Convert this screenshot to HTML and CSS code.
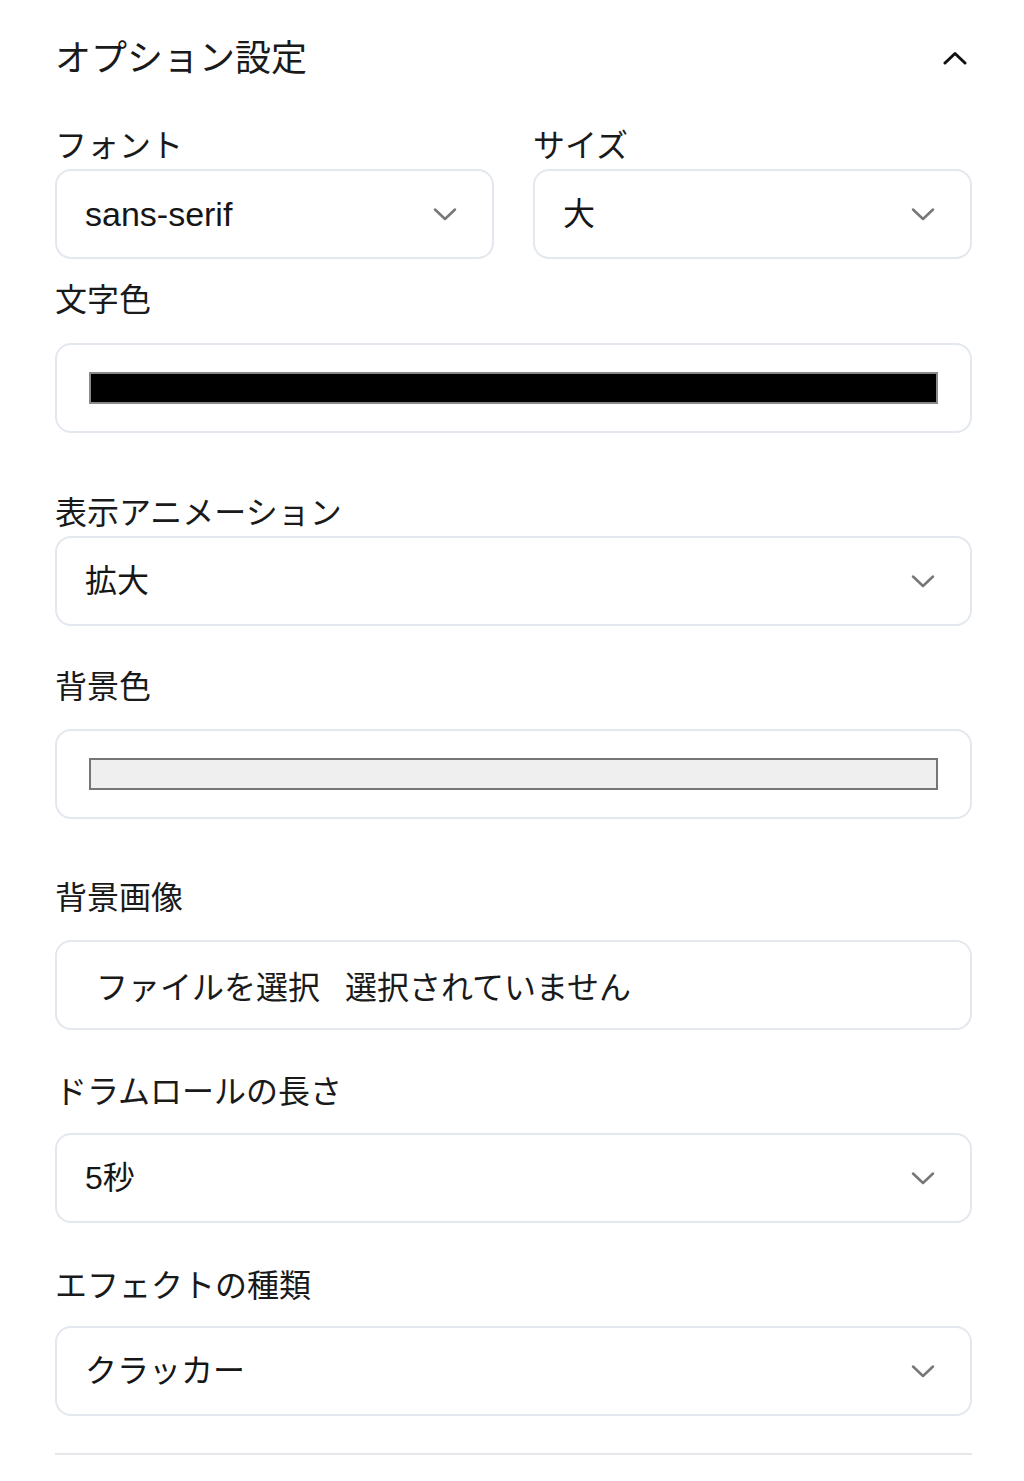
FILE: index.html
```html
<!DOCTYPE html>
<html lang="ja">
<head>
<meta charset="utf-8">
<title>オプション設定</title>
<link rel="stylesheet" href="styles.css">
</head>
<body>
<div class="panel">
  <div class="panel-header">
    <h2 class="panel-title">オプション設定</h2>
    <svg class="collapse-icon" width="24" height="14" viewBox="0 0 24 14" aria-hidden="true"><path d="M2 12 L12 2.5 L22 12" fill="none" stroke="#111" stroke-width="3" stroke-linecap="round" stroke-linejoin="round"/></svg>
  </div>

  <div class="row-two sp-34">
    <div class="field">
      <div class="field-label mb-2">フォント</div>
      <div class="box select-box">
        <span class="select-value latin">sans-serif</span>
        <svg class="chevron" width="24" height="14" viewBox="0 0 24 14" aria-hidden="true"><path d="M2 2.5 L12 12 L22 2.5" fill="none" stroke="#777" stroke-width="2.5" stroke-linecap="round" stroke-linejoin="round"/></svg>
      </div>
    </div>
    <div class="field">
      <div class="field-label mb-2">サイズ</div>
      <div class="box select-box">
        <span class="select-value">大</span>
        <svg class="chevron" width="24" height="14" viewBox="0 0 24 14" aria-hidden="true"><path d="M2 2.5 L12 12 L22 2.5" fill="none" stroke="#777" stroke-width="2.5" stroke-linecap="round" stroke-linejoin="round"/></svg>
      </div>
    </div>
  </div>

  <div class="field sp-14">
    <div class="field-label mb-22">文字色</div>
    <div class="box color-box">
      <div class="swatch swatch-black"></div>
    </div>
  </div>

  <div class="field sp-53">
    <div class="field-label mb-2">表示アニメーション</div>
    <div class="box select-box">
      <span class="select-value">拡大</span>
      <svg class="chevron" width="24" height="14" viewBox="0 0 24 14" aria-hidden="true"><path d="M2 2.5 L12 12 L22 2.5" fill="none" stroke="#777" stroke-width="2.5" stroke-linecap="round" stroke-linejoin="round"/></svg>
    </div>
  </div>

  <div class="field sp-34">
    <div class="field-label mb-21">背景色</div>
    <div class="box color-box">
      <div class="swatch swatch-light"></div>
    </div>
  </div>

  <div class="field sp-52">
    <div class="field-label mb-21">背景画像</div>
    <div class="box file-box">
      <span class="file-button">ファイルを選択</span>
      <span class="file-status">選択されていません</span>
    </div>
  </div>

  <div class="field sp-35">
    <div class="field-label mb-20">ドラムロールの長さ</div>
    <div class="box select-box">
      <span class="select-value latin-mix">5秒</span>
      <svg class="chevron" width="24" height="14" viewBox="0 0 24 14" aria-hidden="true"><path d="M2 2.5 L12 12 L22 2.5" fill="none" stroke="#777" stroke-width="2.5" stroke-linecap="round" stroke-linejoin="round"/></svg>
    </div>
  </div>

  <div class="field sp-36">
    <div class="field-label mb-19">エフェクトの種類</div>
    <div class="box select-box">
      <span class="select-value">クラッカー</span>
      <svg class="chevron" width="24" height="14" viewBox="0 0 24 14" aria-hidden="true"><path d="M2 2.5 L12 12 L22 2.5" fill="none" stroke="#777" stroke-width="2.5" stroke-linecap="round" stroke-linejoin="round"/></svg>
    </div>
  </div>

  <div class="divider"></div>
</div>
</body>
</html>
```

FILE: styles.css
```css
html, body {
  margin: 0;
  padding: 0;
  background: #ffffff;
}

body {
  font-family: "Liberation Sans", "Noto Sans CJK JP", sans-serif;
  color: #1a1a1a;
}

.panel {
  width: 917px;
  margin-left: 55px;
  padding-top: 30px;
}

.panel-header {
  display: flex;
  align-items: flex-start;
  justify-content: space-between;
  height: 55px;
}

.panel-title {
  margin: 0;
  font-family: "Noto Sans CJK JP", sans-serif;
  font-weight: 400;
  font-size: 36px;
  line-height: 51px;
  color: #1a1a1a;
}

.collapse-icon {
  margin-top: 21px;
  margin-right: 5px;
  display: block;
}

.row-two {
  display: grid;
  grid-template-columns: 1fr 1fr;
  column-gap: 39px;
}

.sp-14 { margin-top: 14px; }
.sp-34 { margin-top: 34px; }
.sp-35 { margin-top: 35px; }
.sp-36 { margin-top: 36px; }
.sp-52 { margin-top: 52px; }
.sp-53 { margin-top: 53px; }

.field-label {
  font-family: "Noto Sans CJK JP", sans-serif;
  font-size: 32px;
  line-height: 48px;
  color: #1a1a1a;
}

.mb-2 { margin-bottom: 2px; }
.mb-19 { margin-bottom: 19px; }
.mb-20 { margin-bottom: 20px; }
.mb-21 { margin-bottom: 21px; }
.mb-22 { margin-bottom: 22px; }

.box {
  box-sizing: border-box;
  height: 90px;
  border: 2px solid #e3e7ee;
  border-radius: 16px;
  background: #ffffff;
  display: flex;
  align-items: center;
}

.select-box {
  justify-content: space-between;
  padding-left: 28px;
  padding-right: 35px;
}

.select-value {
  font-size: 32px;
  line-height: 40px;
  color: #161616;
}

.select-value.latin {
  font-size: 34px;
}

.chevron {
  display: block;
}

.color-box {
  padding: 0 32px;
}

.swatch {
  box-sizing: border-box;
  flex: 1;
  height: 32px;
  border: 2px solid #7c7c7c;
}

.swatch-black {
  background: #000000;
  border-color: #8a8a8a;
}

.swatch-light {
  background: #efefef;
  border-color: #767676;
}

.file-box {
  padding-left: 39px;
  font-family: "Noto Sans CJK JP", sans-serif;
  font-size: 32px;
  color: #1a1a1a;
}

.file-button {
  margin-right: 25px;
}

.divider {
  margin-top: 37px;
  height: 2px;
  background: #e5e7eb;
}
```
